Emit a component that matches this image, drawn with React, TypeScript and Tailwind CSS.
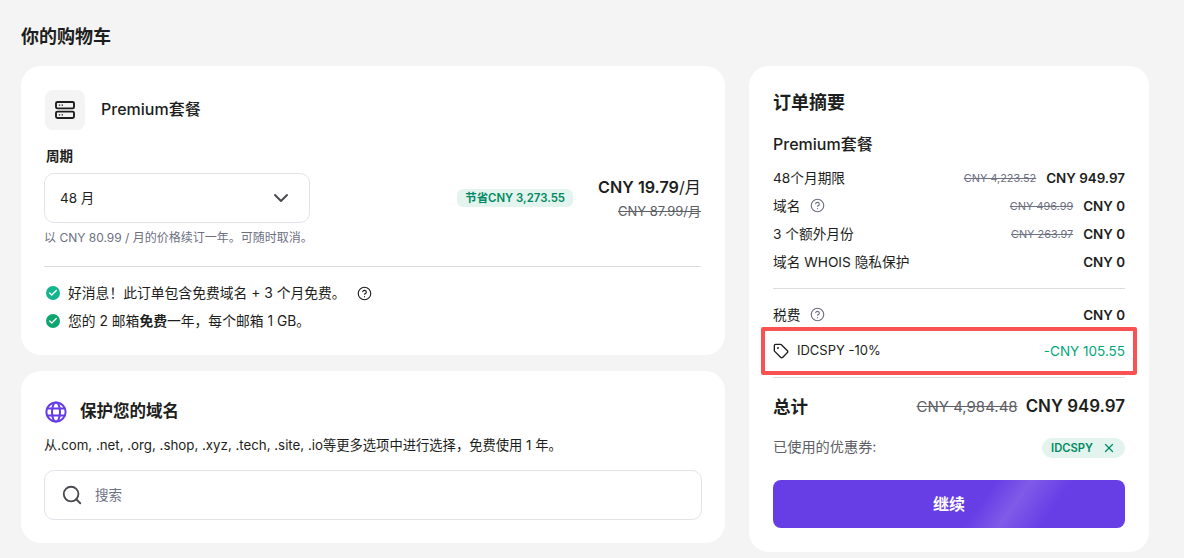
import { Tag, X, ChevronDown, Search, Check, CircleHelp } from "lucide-react";

const font = { fontFamily: "Inter, 'Noto Sans CJK SC', sans-serif" };

function ServerIcon() {
  return (
    <svg width="20" height="18" viewBox="0 0 20 18" fill="none" stroke="#1d1e20" strokeWidth="1.9">
      <rect x="1" y="1" width="18" height="6.4" rx="1.4" />
      <rect x="1" y="10.6" width="18" height="6.4" rx="1.4" />
      <path d="M3.8 4.2h1.4M6.6 4.2h1.4M3.8 13.8h1.4M6.6 13.8h1.4" strokeWidth="1.3" />
    </svg>
  );
}

function GlobeIcon() {
  return (
    <svg width="22" height="22" viewBox="0 0 22 22" fill="none" stroke="#673de6" strokeWidth="2">
      <circle cx="11" cy="11" r="9.6" />
      <ellipse cx="11" cy="11" rx="4" ry="9.6" />
      <path d="M2.4 7.6h17.2M2.4 14.4h17.2" />
    </svg>
  );
}

function CheckDot({ color }: { color: string }) {
  return (
    <span className={`flex h-[14px] w-[14px] shrink-0 items-center justify-center rounded-full ${color}`}>
      <Check size={10} strokeWidth={3.2} color="#fff" />
    </span>
  );
}

function Help({ dark }: { dark?: boolean }) {
  return <CircleHelp size={15} strokeWidth={1.8} color={dark ? "#1d1e20" : "#6d7081"} />;
}

function Row({ label, was, now, help }: { label: string; was?: string; now: string; help?: boolean }) {
  return (
    <div className="flex h-[28px] items-center justify-between text-[13.7px]">
      <span className="flex items-center gap-[10px] text-[#1d1e20]">
        {label}
        {help && <Help />}
      </span>
      <span className="flex items-center gap-[10px]">
        {was && <span className="text-[10.9px] text-[#6d7081] line-through">{was}</span>}
        <span className="text-[13.4px] font-semibold text-[#1d1e20]">{now}</span>
      </span>
    </div>
  );
}

export default function App() {
  return (
    <div className="h-[558px] overflow-hidden bg-[#f4f4f4] pl-[21px] pt-[26px] text-[#1d1e20]" style={font}>
      <h1 className="mb-[18px] text-[18px] leading-[22px] font-bold">你的购物车</h1>
      <div className="flex items-start gap-6">
        <div className="flex w-[704px] flex-col gap-4">
          <section className="h-[289px] rounded-[20px] bg-white px-6 pt-6">
            <div className="flex items-center gap-4">
              <div className="flex h-10 w-10 items-center justify-center rounded-lg bg-[#f4f4f4]">
                <ServerIcon />
              </div>
              <h2 className="pb-[2px] text-[16px] font-medium">Premium套餐</h2>
            </div>
            <div className="mt-[18px] ml-px text-[13.5px] leading-4 font-semibold">周期</div>
            <div className="mt-[9px] flex items-end justify-between">
              <div className="-ml-px flex h-[50px] w-[266px] items-center justify-between rounded-[10px] border border-[#e2e3e8] pr-4 pl-[15px]">
                <span className="text-[13.5px]">48 月</span>
                <ChevronDown size={24} strokeWidth={2} color="#4a4b50" />
              </div>
              <div className="flex items-center gap-[25px]">
                <span className="mb-[2px] rounded-md bg-[#e3f3ed] px-2 py-[1px] text-[11.4px] leading-4 font-semibold text-[#008a63]">
                  节省CNY 3,273.55
                </span>
                <div className="mb-[2px] flex flex-col items-end">
                  <span className="text-[16.2px] leading-6 font-semibold">
                    CNY 19.79<span className="font-normal">/月</span>
                  </span>
                  <span className="mt-[2px] text-[13px] leading-5 text-[#5e6066] line-through">CNY 87.99/月</span>
                </div>
              </div>
            </div>
            <p className="mt-[7px] -ml-px text-[12px] leading-4 text-[#6d7081]">以 CNY 80.99 / 月的价格续订一年。可随时取消。</p>
            <hr className="mt-[20px] -ml-px border-[#dadce0]" />
            <div className="mt-[12px] flex h-[28px] items-center pl-px text-[13.8px]">
              <CheckDot color="bg-[#14b48c]" />
              <span className="ml-2">好消息！此订单包含免费域名 + 3 个月免费。</span>
              <span className="ml-[11px] flex">
                <Help dark />
              </span>
            </div>
            <div className="flex h-[28px] items-center pl-px text-[13.8px]">
              <CheckDot color="bg-[#0ea56f]" />
              <span className="ml-2">
                您的 2 邮箱<b className="font-semibold">免费</b>一年，每个邮箱 1 GB。
              </span>
            </div>
          </section>
          <section className="h-[172px] rounded-[20px] bg-white px-6 pt-[28px]">
            <div className="flex items-center gap-[13px]">
              <GlobeIcon />
              <h2 className="pb-[2px] text-[16.5px] font-semibold">保护您的域名</h2>
            </div>
            <p className="mt-[9px] -ml-px text-[13.3px] leading-5">
              从.com, .net, .org, .shop, .xyz, .tech, .site, .io等更多选项中进行选择，免费使用 1 年。
            </p>
            <div className="-mx-px mt-[15px] flex h-[50px] items-center rounded-[10px] border border-[#e2e3e8] pl-4">
              <Search size={22} strokeWidth={2} color="#4a4b50" />
              <span className="ml-3 text-[13.5px] text-[#6d7081]">搜索</span>
            </div>
          </section>
        </div>
        <aside className="h-[486px] w-[400px] rounded-[20px] bg-white px-6 pt-[25px]">
          <h2 className="text-[18px] leading-6 font-bold">订单摘要</h2>
          <h3 className="mt-[17px] text-[16px] leading-6 font-medium">Premium套餐</h3>
          <div className="mt-[8px]">
            <Row label="48个月期限" was="CNY 4,223.52" now="CNY 949.97" />
            <Row label="域名" was="CNY 496.99" now="CNY 0" help />
            <Row label="3 个额外月份" was="CNY 263.97" now="CNY 0" />
            <Row label="域名 WHOIS 隐私保护" now="CNY 0" />
          </div>
          <hr className="mt-[12px] border-[#dadce0]" />
          <div className="mt-[12px]">
            <Row label="税费" now="CNY 0" help />
          </div>
          <div className="relative mt-[4px] flex h-[36px] items-center justify-between">
            <span className="flex items-center gap-2 text-[13px]">
              <Tag size={16} strokeWidth={2} />
              IDCSPY -10%
            </span>
            <span className="text-[13.5px] text-[#00a77c]">-CNY 105.55</span>
            {/* red annotation box over the coupon row */}
            <div className="absolute -inset-x-3 -top-[6px] h-[48px] rounded-[2px] border-[4px] border-[#fa5252]" />
          </div>
          <hr className="mt-[8px] border-[#dadce0]" />
          <div className="mt-3 flex h-[34px] items-center justify-between">
            <span className="text-[17.5px] font-bold">总计</span>
            <span className="flex items-center gap-2">
              <span className="text-[15px] text-[#5e6066] line-through">CNY 4,984.48</span>
              <span className="text-[16.9px] font-semibold">CNY 949.97</span>
            </span>
          </div>
          <div className="mt-[13px] flex h-[22px] items-center justify-between">
            <span className="pb-[2px] text-[14.2px] text-[#5e6066]">已使用的优惠券:</span>
            <span className="flex h-[20px] items-center gap-[9px] rounded-[10px] bg-[#e3f3ed] px-[9px] text-[11.2px] font-semibold text-[#008a63]">
              IDCSPY
              <X size={14} strokeWidth={2.2} />
            </span>
          </div>
          <button className="mt-[21px] h-[48px] w-full rounded-lg bg-[linear-gradient(125deg,#673de6_58%,#7f5be8_67%,#673de6_78%)] text-[16px] font-bold text-white">
            继续
          </button>
        </aside>
      </div>
    </div>
  );
}
